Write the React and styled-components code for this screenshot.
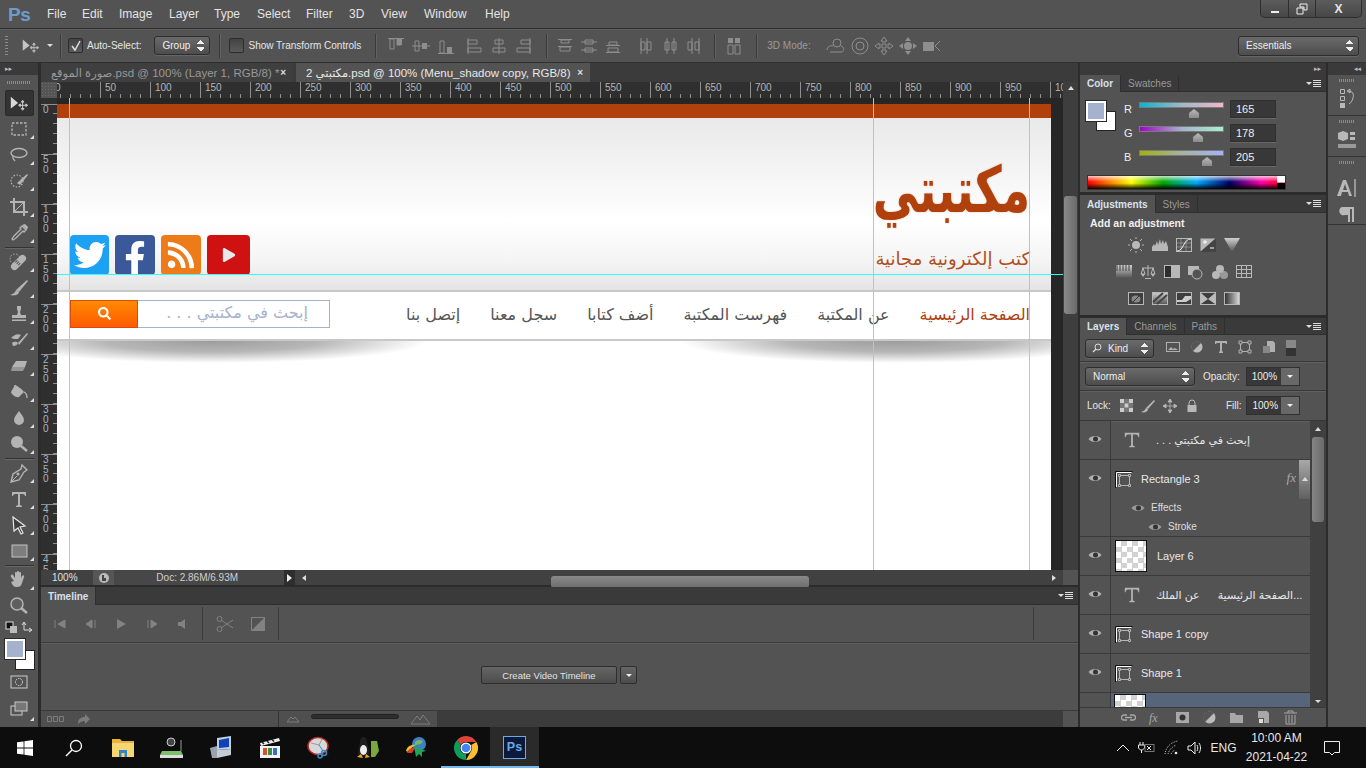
import React from 'react';
import styled, { createGlobalStyle } from 'styled-components';
import { FaTwitter, FaFacebookF, FaRss, FaPlay, FaSearch } from 'react-icons/fa';

const UI = '"Liberation Sans", "DejaVu Sans", sans-serif';
const AR = '"DejaVu Sans", sans-serif';

const Global = createGlobalStyle`
  html, body { margin: 0; padding: 0; background: #535353; overflow: hidden; }
  * { box-sizing: border-box; }
`;

const Screen = styled.div`
  width: 1366px;
  height: 768px;
  display: flex;
  flex-direction: column;
  background: #535353;
  color: #e6e6e6;
  font-family: ${UI};
  font-size: 10px;
  overflow: hidden;
`;

/* menu bar */
const MenuBar = styled.div`
  height: 29px;
  flex: none;
  display: flex;
  align-items: center;
  position: relative;
  border-bottom: 1px solid #2f2f2f;
  padding-left: 8px;
`;
const PsLogo = styled.div`
  width: 39px;
  font: bold 19px/1 "Liberation Sans", sans-serif;
  color: #6c9ccb;
  letter-spacing: -0.5px;
`;
const MenuItem = styled.div`
  font-size: 12px;
  color: #e4e4e4;
  width: ${(p) => p.$w}px;
`;
const WinButtons = styled.div`
  position: absolute;
  right: 4px;
  top: 0;
  height: 18px;
  width: 102px;
  display: grid;
  grid-template-columns: 28px 27px 1fr;
  background: linear-gradient(#5c5c5c, #474747);
  border: 1px solid #2e2e2e;
  border-top: 0;
  border-radius: 0 0 5px 5px;
`;
const WinBtn = styled.div`
  display: flex;
  align-items: center;
  justify-content: center;
  border-right: 1px solid #2e2e2e;
  font-weight: bold;
  font-size: 12px;
  &:last-child { border-right: 0; }
`;

/* options bar */
const OptionsBar = styled.div`
  height: 34px;
  flex: none;
  display: flex;
  align-items: center;
  border-bottom: 1px solid #2f2f2f;
  box-shadow: inset 0 1px 0 #606060;
  padding-left: 5px;
`;
const Grip = styled.div`
  width: 3px;
  height: 20px;
  background: repeating-linear-gradient(#8a8a8a 0 1px, transparent 1px 3px);
`;
const VSep = styled.div`
  width: 1px;
  height: 24px;
  background: #3a3a3a;
  box-shadow: 1px 0 0 #626262;
  margin-left: ${(p) => p.$ml}px;
  flex: none;
`;
const Check = styled.div`
  width: 15px;
  height: 15px;
  flex: none;
  margin-left: ${(p) => p.$ml}px;
  border: 1px solid #2d2d2d;
  border-radius: 2px;
  background: linear-gradient(#444, #5a5a5a);
  display: flex;
  align-items: center;
  justify-content: center;
`;
const OptLabel = styled.span`
  margin-left: ${(p) => p.$ml || 0}px;
  color: ${(p) => p.$dim ? '#9c9c9c' : '#e6e6e6'};
  white-space: nowrap;
  flex: none;
`;
const Select = styled.div`
  flex: none;
  width: ${(p) => p.$w}px;
  height: ${(p) => p.$h || 19}px;
  margin-left: ${(p) => p.$ml || 0}px;
  display: flex;
  align-items: center;
  justify-content: space-between;
  padding: 0 5px 0 ${(p) => p.$pl || 7}px;
  border: 1px solid #2d2d2d;
  border-radius: 3px;
  background: linear-gradient(#6a6a6a, #4d4d4d);
  color: #eee;
  box-shadow: 0 1px 0 #666;
`;
const KindLabel = styled.span`
  display: flex;
  align-items: center;
  gap: 6px;
`;
const Updown = styled.span`
  display: inline-block;
  width: 7px;
  height: 11px;
  flex: none;
  background:
    linear-gradient(135deg, transparent 50%, #eee 50%) 0 0 / 4px 4px no-repeat,
    linear-gradient(225deg, transparent 50%, #eee 50%) 3.5px 0 / 4px 4px no-repeat,
    linear-gradient(45deg, transparent 50%, #eee 50%) 0 7px / 4px 4px no-repeat,
    linear-gradient(315deg, transparent 50%, #eee 50%) 3.5px 7px / 4px 4px no-repeat;
`;
const IconRow = styled.div`
  display: flex;
  flex: none;
  margin-left: ${(p) => p.$ml || 0}px;
  gap: ${(p) => p.$gap || 0}px;
  color: ${(p) => p.$c || '#8e8e8e'};
`;
const OptSpacer = styled.div`flex: 1;`;

/* workspace */
const Workspace = styled.div`
  flex: 1;
  min-height: 0;
  display: flex;
  background: #2c2c2c;
`;

/* tools */
const ToolColumn = styled.div`
  width: 38px;
  flex: none;
  background: #535353;
  display: flex;
  flex-direction: column;
  align-items: center;
`;
const CollapseStrip = styled.div`
  height: 12px;
  align-self: stretch;
  background: #3a3a3a;
  color: #bbb;
  font-size: 7px;
  line-height: 12px;
  padding-left: 5px;
  flex: none;
`;
const GripH = styled.div`
  width: 24px;
  height: 3px;
  margin: 6px 0 6px;
  flex: none;
  background: repeating-linear-gradient(90deg, #8a8a8a 0 1px, transparent 1px 2px);
`;
const ToolBtn = styled.div`
  position: relative;
  width: 29px;
  height: ${(p) => p.$h || 26}px;
  flex: none;
  display: flex;
  align-items: center;
  justify-content: center;
  color: #b4b4b4;
  ${(p) => p.$active && 'background: #333; border: 1px solid #2a2a2a; border-radius: 2px; color: #d8d8d8;'}
  ${(p) => p.$corner && `
    &::after {
      content: '';
      position: absolute;
      right: 0;
      bottom: 3px;
      border-style: solid;
      border-width: 0 0 4px 4px;
      border-color: transparent transparent #ddd transparent;
    }
  `}
`;
const ToolDivider = styled.div`
  width: 29px;
  height: 1px;
  margin: 1px 0;
  background: #333;
  box-shadow: 0 1px 0 #666;
  flex: none;
`;
const SwapRow = styled.div`
  width: 29px;
  height: 16px;
  display: flex;
  justify-content: space-between;
  align-items: center;
  flex: none;
`;
const ColorStack = styled.div`
  position: relative;
  width: 31px;
  height: 32px;
  margin-top: 3px;
  flex: none;
`;
const Swatch = styled.div`
  position: absolute;
  left: ${(p) => p.$x}px;
  top: ${(p) => p.$y}px;
  width: ${(p) => p.$s}px;
  height: ${(p) => p.$s}px;
  background: ${(p) => p.$c};
  border: 1px solid ${(p) => p.$line || '#222'};
  ${(p) => p.$ring && `box-shadow: 0 0 0 1px #fff inset, 0 0 0 1px #2a2a2a;`}
`;

/* center */
const Center = styled.div`
  width: 1037px;
  margin-left: 3px;
  flex: none;
  display: flex;
  flex-direction: column;
  min-height: 0;
`;
const DocTabs = styled.div`
  height: 19px;
  flex: none;
  display: flex;
  background: #3b3b3b;
  width: 1037px;
`;
const DocTab = styled.div`
  width: ${(p) => p.$w}px;
  margin-right: ${(p) => p.$mr || 0}px;
  display: flex;
  align-items: center;
  justify-content: space-between;
  padding: 0 7px 0 10px;
  white-space: nowrap;
  background: ${(p) => p.$active ? '#535353' : '#3f3f3f'};
  color: ${(p) => p.$active ? '#e8e8e8' : '#989898'};
  font-size: 11.5px;
`;
const CloseX = styled.span`
  font-size: 10px;
  font-weight: bold;
  color: #ddd;
`;
const RulerRow = styled.div`
  height: 16px;
  flex: none;
  display: flex;
  position: relative;
  background: #2f2f2f;
  overflow: hidden;
`;
const RulerCorner = styled.div`
  width: 16px;
  flex: none;
  position: relative;
  z-index: 2;
  background: #555;
  background-image: radial-gradient(#6a6a6a 0.5px, transparent 0.6px);
  background-size: 3px 3px;
`;
const RulerTrack = styled.div`
  flex: 1;
  display: flex;
  margin-left: -7px;
  overflow: hidden;
`;
const RulerCell = styled.div`
  width: 50px;
  flex: none;
  border-left: 1px solid #8f8f8f;
  padding-left: 4px;
  font-size: 10px;
  line-height: 11px;
  color: #b5b5b5;
  background: repeating-linear-gradient(90deg, transparent 0 9px, #8f8f8f 9px 10px) 0 100% / 100% 4px no-repeat;
`;
const ScrollTop = styled.div`
  width: 15px;
  flex: none;
  background: #3e3e3e;
  display: flex;
  justify-content: center;
  padding-top: 4px;
`;
const TriUp = styled.span`
  width: 0;
  height: 0;
  border-left: 3px solid transparent;
  border-right: 3px solid transparent;
  border-bottom: 4px solid #ddd;
`;
const CanvasRow = styled.div`
  flex: 1;
  min-height: 0;
  display: flex;
`;
const VRuler = styled.div`
  width: 16px;
  flex: none;
  background: #2f2f2f;
  padding-top: 6px;
  overflow: hidden;
`;
const VRulerCell = styled.div`
  height: 50px;
  display: flex;
  flex-direction: column;
  padding: 1px 0 0 2px;
  font-size: 10px;
  line-height: 9.5px;
  color: #a8b4c0;
  background:
    linear-gradient(#8f8f8f, #8f8f8f) 100% 0 / 16px 1px no-repeat,
    repeating-linear-gradient(transparent 0 9px, #8f8f8f 9px 10px) 100% 0 / 4px 100% no-repeat;
`;
const Pasteboard = styled.div`
  position: relative;
  flex: 1;
  min-width: 0;
  background: #262626;
  padding: 6px 12px 0 0;
  overflow: hidden;
`;
const Guide = styled.div`
  position: absolute;
  background: #30ffff;
  z-index: 3;
  ${(p) => p.$h
    ? `left: 0; right: 0; top: ${p.$at}px; height: 1px;`
    : `top: 0; bottom: 0; left: ${p.$at}px; width: 1px;`}
`;
const Doc = styled.div`
  height: 100%;
  background: #fff;
  overflow: hidden;
  direction: ltr;
`;
const TopBand = styled.div`
  height: 14px;
  background: #b0400c;
`;
const Header = styled.div`
  height: 172px;
  padding: 0 21px 15px 13px;
  display: flex;
  justify-content: space-between;
  align-items: flex-end;
  background: linear-gradient(#e9e9e9 0, #fff 60%, #f4f4f4 84%, #e4e4e4 100%);
`;
const SocialRow = styled.div`
  display: flex;
  gap: 6px;
`;
const Social = styled.div`
  width: ${(p) => p.$w || 40}px;
  height: 40px;
  background: ${(p) => p.$bg};
  border-radius: 4px;
  color: ${(p) => p.$fg || '#fff'};
  display: flex;
  align-items: ${(p) => p.$align || 'center'};
  justify-content: center;
  overflow: hidden;
`;
const Brand = styled.div`
  direction: rtl;
  display: flex;
  flex-direction: column;
  align-items: flex-start;
  margin-bottom: 4px;
  color: #b0400c;
  font-family: ${AR};
`;
const BrandTitle = styled.div`
  font-size: 64px;
  font-weight: bold;
  line-height: 70px;
  white-space: nowrap;
  transform: scaleX(0.715);
  transform-origin: right center;
  text-shadow: 0 0 2px rgba(176, 64, 12, 0.4);
`;
const BrandTag = styled.div`
  font-size: 18px;
  line-height: 24px;
  margin-top: 22px;
  white-space: nowrap;
  color: #b24e22;
`;
const Nav = styled.div`
  height: 51px;
  border-top: 2px solid #c8c8c8;
  border-bottom: 2px solid #c8c8c8;
  padding: 0 21px 0 13px;
  display: flex;
  align-items: center;
  justify-content: space-between;
  background: #fff;
`;
const SearchBox = styled.div`
  display: flex;
  height: 28px;
  margin-top: -4px;
`;
const SearchBtn = styled.div`
  width: 68px;
  background: linear-gradient(#ff8a00, #ff5a00);
  border: 1px solid #d84a10;
  color: #fff;
  display: flex;
  align-items: center;
  justify-content: center;
  font-size: 13px;
`;
const SearchInput = styled.div`
  width: 192px;
  border: 1px solid #a5b2cd;
  border-left: 0;
  color: #a5b2cd;
  font-family: ${AR};
  font-size: 16px;
  line-height: 23px;
  padding: 0 21px;
  direction: rtl;
  white-space: nowrap;
`;
const NavList = styled.div`
  display: flex;
  direction: rtl;
  gap: 30px;
  margin-top: -3px;
`;
const NavItem = styled.div`
  font-family: ${AR};
  font-size: 16px;
  white-space: nowrap;
  color: ${(p) => p.$active ? '#b0400c' : '#555'};
`;
const ShadowStrip = styled.div`
  height: 24px;
  display: flex;
  justify-content: space-between;
  overflow: hidden;
  margin: 0 -60px;
`;
const ShadowBlob = styled.div`
  width: 430px;
  height: 44px;
  margin-top: -22px;
  background: radial-gradient(closest-side, #9c9c9c 0, rgba(170, 170, 170, 0.85) 50%, rgba(255, 255, 255, 0) 100%);
`;
const VScroll = styled.div`
  width: 15px;
  flex: none;
  background: #3e3e3e;
  padding: 98px 1px 0;
`;
const VThumb = styled.div`
  height: 118px;
  background: linear-gradient(90deg, #8a8a8a, #6a6a6a);
  border-radius: 3px;
`;
const StatusBar = styled.div`
  height: 16px;
  flex: none;
  display: flex;
  align-items: center;
  background: #414141;
  border-bottom: 1px solid #2b2b2b;
`;
const StatusZoom = styled.div`
  width: 52px;
  padding-left: 11px;
  color: #e0e0e0;
`;
const StatusIcon = styled.div`
  width: 22px;
  height: 15px;
  background: #565656;
  display: flex;
  align-items: center;
  justify-content: center;
`;
const StatusDoc = styled.div`
  width: 171px;
  height: 15px;
  line-height: 15px;
  text-align: center;
  color: #d0d0d0;
  background: #474747;
  padding-right: 4px;
`;
const StatusArrow = styled.div`
  width: 11px;
  height: 15px;
  background: #2e2e2e;
  display: flex;
  align-items: center;
  justify-content: center;
`;
const TriRight = styled.span`
  width: 0;
  height: 0;
  border-top: ${(p) => p.$sm ? 3 : 4}px solid transparent;
  border-bottom: ${(p) => p.$sm ? 3 : 4}px solid transparent;
  border-left: ${(p) => p.$sm ? 4 : 5}px solid ${(p) => p.$c || '#eee'};
`;
const TriLeft = styled.span`
  width: 0;
  height: 0;
  border-top: 3px solid transparent;
  border-bottom: 3px solid transparent;
  border-right: 4px solid #ddd;
`;
const HScroll = styled.div`
  width: 775px;
  display: flex;
  align-items: center;
  padding-left: 7px;
  position: relative;
`;
const HThumb = styled.div`
  position: absolute;
  left: 256px;
  top: 1px;
  width: 258px;
  height: 12px;
  border-radius: 3px;
  background: linear-gradient(#8a8a8a, #6c6c6c);
`;
const HRight = styled.div`
  margin-left: auto;
  margin-right: 7px;
  display: flex;
`;
const CornerPatch = styled.div`
  width: 15px;
  height: 15px;
  background: #535353;
`;

const TimelinePanel = styled.div`
  height: 140px;
  flex: none;
  margin-top: 1px;
  display: flex;
  flex-direction: column;
  background: #535353;
`;
const PanelTabs = styled.div`
  height: ${(p) => p.$h || 18}px;
  flex: none;
  display: flex;
  background: #3a3a3a;
  border-bottom: 1px solid #2f2f2f;
  position: relative;
`;
const PanelTab = styled.div`
  padding: 0 ${(p) => p.$pad || 7}px;
  display: flex;
  align-items: center;
  font-weight: ${(p) => p.$active ? 'bold' : 'normal'};
  color: ${(p) => p.$active ? '#d8e2ec' : '#999'};
  background: ${(p) => p.$active ? '#535353' : 'transparent'};
  border-right: 1px solid #2f2f2f;
  font-size: 10px;
  height: calc(100% + 1px);
`;
const PanelMenu = styled.div`
  position: absolute;
  right: 5px;
  top: 5px;
  display: flex;
  align-items: center;
  gap: 1px;
`;
const Bars = styled.span`
  width: 8px;
  height: 7px;
  background: repeating-linear-gradient(#ddd 0 1px, transparent 1px 2px);
`;
const TriDown = styled.span`
  width: 0;
  height: 0;
  border-left: 3px solid transparent;
  border-right: 3px solid transparent;
  border-top: 3px solid ${(p) => p.$c || '#ddd'};
`;
const TimelineControls = styled.div`
  height: 38px;
  flex: none;
  display: flex;
  border-bottom: 1px solid #3a3a3a;
  color: #828282;
  box-shadow: 0 1px 0 #5f5f5f;
`;
const ControlsGroup = styled.div`
  width: ${(p) => p.$w}px;
  display: flex;
  align-items: center;
  justify-content: space-around;
  padding: 0 ${(p) => p.$pad || 0}px;
  border-right: 1px solid #3a3a3a;
  margin: 2px 0;
`;
const TimelineBody = styled.div`
  flex: 1;
  display: flex;
  padding: 23px 0 0 440px;
  gap: 3px;
`;
const TimelineBtn = styled.div`
  height: 18px;
  width: ${(p) => p.$w}px;
  border: 1px solid #2d2d2d;
  border-radius: 2px;
  background: linear-gradient(#666, #4c4c4c);
  color: #e4e4e4;
  display: flex;
  align-items: center;
  justify-content: center;
  font-size: 9.5px;
`;
const TimelineFoot = styled.div`
  height: 17px;
  flex: none;
  display: flex;
  border-top: 1px solid #3a3a3a;
  background: #3c3c3c;
`;
const FootLeft = styled.div`
  width: 238px;
  background: #4f4f4f;
  border-right: 1px solid #333;
  display: flex;
  align-items: center;
  padding-left: 6px;
  gap: 12px;
  color: #7c7c7c;
`;
const FootMid = styled.div`
  width: 158px;
  background: #4f4f4f;
  display: flex;
  align-items: center;
  justify-content: space-between;
  padding: 0 6px 0 8px;
  color: #7c7c7c;
`;
const FootGap = styled.div`flex: 1;`;
const FootEnd = styled.div`
  width: 15px;
  background: #535353;
`;
const ZoomTrack = styled.div`
  width: 88px;
  height: 5px;
  margin-top: -6px;
  border-radius: 3px;
  background: #2e2e2e;
  border: 1px solid #222;
`;

/* right panels */
const Panels = styled.div`
  width: 246px;
  margin-left: 2px;
  flex: none;
  display: flex;
  flex-direction: column;
  min-height: 0;
`;
const PanelCollapse = styled.div`
  height: 12px;
  flex: none;
  background: #3a3a3a;
  text-align: right;
  font-size: 7px;
  line-height: 12px;
  color: #bbb;
  padding-right: 5px;
`;
const Panel = styled.div`
  height: ${(p) => p.$h}px;
  flex: none;
  margin-bottom: 3px;
  display: flex;
  flex-direction: column;
  background: #535353;
`;
const ColorBody = styled.div`
  flex: 1;
  position: relative;
  padding: 8px 0 0 50px;
`;
const SliderRow = styled.div`
  height: 24px;
  display: flex;
  align-items: flex-start;
`;
const SliderLabel = styled.div`
  width: 9px;
  margin: 3px 0 0 -6px;
  font-size: 11px;
  color: #eee;
`;
const SliderWrap = styled.div`
  width: 85px;
  margin-left: 6px;
  position: relative;
`;
const SliderBar = styled.div`
  height: 6px;
  margin-top: 2px;
  border: 1px solid #7a7a7a;
  background: ${(p) => p.$bg};
`;
const SliderThumb = styled.div`
  position: absolute;
  left: ${(p) => p.$x}px;
  top: 9px;
  width: 10px;
  height: 9px;
  background: linear-gradient(#bbb, #8a8a8a);
  clip-path: polygon(50% 0, 100% 45%, 100% 100%, 0 100%, 0 45%);
`;
const ValueBox = styled.div`
  width: 46px;
  height: 18px;
  margin: 0 0 0 6px;
  background: #383838;
  border: 1px solid #303030;
  color: #eee;
  font-size: 11px;
  line-height: 17px;
  padding-left: 5px;
  box-shadow: 0 1px 0 #666;
`;
const Spectrum = styled.div`
  position: absolute;
  left: 7px;
  top: 83px;
  width: 199px;
  height: 15px;
  border: 1px solid #333;
  background:
    linear-gradient(90deg, transparent 96%, #fff 96%) top / 100% 50% no-repeat,
    linear-gradient(90deg, transparent 96%, #000 96%) bottom / 100% 50% no-repeat,
    linear-gradient(rgba(255,255,255,.75), rgba(255,255,255,0) 45%, rgba(0,0,0,0) 55%, rgba(0,0,0,.95)),
    linear-gradient(90deg, #f00, #ff0 22%, #0a0 38%, #0af 55%, #006 72%, #f0a 88%, #f00);
`;
const AdjTitle = styled.div`
  font-weight: bold;
  font-size: 10.5px;
  padding: 4px 0 0 10px;
  color: #f0f0f0;
  height: 18px;
`;
const AdjRow = styled.div`
  height: 27px;
  display: flex;
  justify-content: center;
  align-items: center;
  gap: 8px;
  padding-right: 38px;
  color: #b8b8b8;
`;
const FilterRow = styled.div`
  height: ${(p) => p.$h}px;
  flex: none;
  display: flex;
  align-items: center;
  padding: 0 5px;
  border-bottom: 1px solid #383838;
  box-shadow: 0 1px 0 #606060;
  color: #c0c0c0;
`;
const NumBox = styled.div`
  width: 54px;
  height: 19px;
  margin-left: ${(p) => p.$ml || 0}px;
  display: flex;
  background: #383838;
  border: 1px solid #303030;
  line-height: 17px;
  color: #eee;
  padding-left: 5px;
`;
const NumArrow = styled.div`
  margin-left: auto;
  width: 18px;
  background: #686868;
  display: flex;
  align-items: center;
  justify-content: center;
`;
const LayersWrap = styled.div`
  flex: 1;
  min-height: 0;
  display: flex;
  overflow: hidden;
`;
const LayerList = styled.div`
  width: 230px;
  flex: none;
`;
const LayerRow = styled.div`
  height: ${(p) => p.$h || 39}px;
  display: flex;
  border-bottom: 1px solid #3a3a3a;
  position: relative;
  background: ${(p) => p.$selected ? '#56657a' : 'transparent'};
  overflow: hidden;
`;
const EyeCell = styled.div`
  width: 31px;
  flex: none;
  border-right: 1px solid #3a3a3a;
  background: #535353;
  display: flex;
  justify-content: center;
  padding-top: 13px;
  color: #b0b0b0;
`;
const LayerBody = styled.div`
  flex: 1;
  min-width: 0;
  display: flex;
  flex-direction: column;
`;
const LayerMain = styled.div`
  height: 38px;
  flex: none;
  display: flex;
  align-items: center;
  padding-left: 4px;
  color: #e8e8e8;
  font-size: 11px;
  white-space: nowrap;
`;
const LayerName = styled.span`
  margin-left: ${(p) => p.$ml || 0}px;
  font-family: ${UI};
  direction: ${(p) => p.$rtl ? 'rtl' : 'ltr'};
`;
const TypeSlot = styled.span`
  margin-left: 8px;
  flex: none;
`;
const EffectLine = styled.div`
  height: 19px;
  display: flex;
  align-items: center;
  gap: 6px;
  padding-left: ${(p) => p.$pl}px;
  color: #dedede;
  font-size: 10px;
`;
const Checker = styled.div`
  width: 32px;
  height: 32px;
  margin-top: ${(p) => p.$mt || 0}px;
  margin-left: ${(p) => p.$ml || 0}px;
  flex: none;
  border: 1px solid #111;
  background: repeating-conic-gradient(#d2d2d2 0 25%, #fff 0 50%) 0 0 / 11px 11px;
`;
const FxMark = styled.span`
  position: absolute;
  right: 14px;
  top: 10px;
  font: italic 13px "Liberation Serif", serif;
  color: #aaa;
`;
const FxScroll = styled.div`
  position: absolute;
  right: 0;
  top: 0;
  width: 11px;
  height: 39px;
  background: linear-gradient(#a8a8a8, #606060);
  display: flex;
  justify-content: center;
  padding-top: 17px;
`;
const LayerScroll = styled.div`
  flex: 1;
  background: #404040;
  display: flex;
  flex-direction: column;
  align-items: center;
  padding: 6px 1px 4px;
`;
const LayerThumb = styled.div`
  width: 12px;
  height: 85px;
  margin-top: 6px;
  border-radius: 3px;
  background: linear-gradient(90deg, #858585, #6a6a6a);
`;
const LayerFoot = styled.div`
  height: 20px;
  flex: none;
  display: flex;
  align-items: center;
  justify-content: flex-end;
  gap: 12px;
  padding-right: 28px;
  border-top: 1px solid #3a3a3a;
  color: #a8a8a8;
`;

/* dock */
const Dock = styled.div`
  width: 38px;
  margin-left: 2px;
  flex: none;
  display: flex;
  flex-direction: column;
`;
const DockSection = styled.div`
  height: ${(p) => p.$h}px;
  flex: none;
  display: flex;
  flex-direction: column;
  align-items: center;
  gap: ${(p) => p.$gap || 0}px;
  background: #535353;
  border-bottom: 1px solid #333;
  color: #b8b8b8;
`;
const DockFill = styled.div`
  flex: 1;
  background: #535353;
`;
const DockGrip = styled(GripH)`
  margin: 4px 0 6px;
  width: 16px;
`;

/* taskbar */
const Taskbar = styled.div`
  height: 41px;
  flex: none;
  display: flex;
  align-items: stretch;
  background: #0d0d0d;
`;
const TaskBtn = styled.div`
  width: 49px;
  flex: none;
  display: flex;
  align-items: center;
  justify-content: center;
  background: ${(p) => p.$active ? '#2a2a2a' : 'transparent'};
  border-bottom: 2px solid ${(p) => p.$open ? '#76b9ed' : 'transparent'};
  padding-top: 2px;
`;
const Tray = styled.div`
  margin-left: auto;
  padding-right: 12px;
  display: flex;
  align-items: center;
  color: #e8e8e8;
  font-family: ${UI};
  font-size: 12px;
`;
const TrayItem = styled.div`
  width: ${(p) => p.$w}px;
  display: flex;
  justify-content: center;
  flex: none;
`;
const Clock = styled.div`
  width: 65px;
  text-align: center;
  line-height: 19px;
  font-size: 12px;
  white-space: nowrap;
`;

/* drawings */
const Svg = ({ s = 20, w, h, vb = '0 0 20 20', children }) => (
  <svg width={w || s} height={h || s} viewBox={vb} fill="none" style={{ flex: 'none', display: 'block' }}>{children}</svg>
);

const MoveIcon = ({ c = 'currentColor', s = 20 }) => (
  <Svg s={s} vb="0 0 22 20">
    <path d="M2 3v13l8-6z" fill={c} />
    <path d="M15 8v9M11 12.500h9M15 7l-1.500 2h3zM15 18l-1.500-2h3zM10.500 12.500l2-1.500v3zM20.500 12.500l-2-1.500v3z" stroke={c} strokeWidth="1" />
  </Svg>
);

const toolIcons = [
  [<MoveIcon />, true],
  [<Svg><rect x="3" y="4" width="14" height="12" stroke="currentColor" strokeWidth="1.300" strokeDasharray="2.500 1.500" /></Svg>],
  [<Svg><ellipse cx="10" cy="8" rx="8" ry="4.500" stroke="currentColor" strokeWidth="1.400" /><path d="M4 11c-1 3 1 3 2 5" stroke="currentColor" strokeWidth="1.300" /></Svg>],
  [<Svg><circle cx="8" cy="10" r="6" stroke="currentColor" strokeWidth="1.200" strokeDasharray="1.500 1.500" /><path d="M8 12 18 3l1 1-8 10z" fill="currentColor" /></Svg>],
  [<Svg><path d="M5 1v14h14M1 5h14v14" stroke="currentColor" strokeWidth="2" /><path d="M5 15 15 5" stroke="currentColor" strokeWidth="1" /></Svg>],
  [<Svg><path d="M13 3l4 4-2 2-1-1-7 7-3 2-1-1 2-3 7-7-1-1z" stroke="currentColor" strokeWidth="1.300" /><path d="M13 2l5 5 1-3-3-3z" fill="currentColor" /></Svg>],
  'div',
  [<Svg><path d="M3 12 11 4a3 3 0 0 1 5 5l-8 8a3 3 0 0 1-5-5z" fill="currentColor" /><circle cx="6" cy="7" r="5" stroke="currentColor" strokeDasharray="1.500 1.500" /><path d="m7 9 4 4" stroke="#535353" strokeDasharray="1 1" strokeWidth="3" /></Svg>],
  [<Svg><path d="M7 12 18 2l1 1-9 11z" fill="currentColor" /><path d="M7 12c-1 3-3 4-6 5 4 1 9 0 9-3z" fill="currentColor" /></Svg>],
  [<Svg><path d="M8 2h4v3l-1 3 1 3h5v3H3v-3h5l1-3-1-3z" fill="currentColor" /><rect x="3" y="15.500" width="14" height="1.500" fill="currentColor" /></Svg>],
  [<Svg><path d="M2 8c5-5 8-4 10-3L9 9c-3 0-5 0-7-1z" fill="currentColor" /><path d="M9 13 18 3l1 1-9 11z" fill="currentColor" /><path d="M3 13c3-2 5-1 6 0-1 2-2 3-5 3z" fill="currentColor" /></Svg>],
  [<Svg><path d="M7 5h11l-2 6H3z" fill="currentColor" /><path d="M3 11h13l-2 4H2z" fill="currentColor" opacity="0.7" /></Svg>],
  [<Svg><path d="M6 3c3 1 8 5 9 7l-5 5c-3 1-7-2-8-5z" fill="currentColor" /><path d="M6 3v5M15 10c2 1 3 3 3 6" stroke="currentColor" strokeWidth="1.300" /></Svg>],
  [<Svg><path d="M10 3c2 3 5 6 5 9a5 5 0 0 1-10 0c0-3 3-6 5-9z" fill="currentColor" /></Svg>],
  [<Svg><circle cx="8" cy="8" r="6" fill="currentColor" /><path d="m12 12 6 5" stroke="currentColor" strokeWidth="2.500" /></Svg>],
  'div',
  [<Svg><path d="M13 2l5 5-3 2-5 8-8 2 2-8 8-5z" stroke="currentColor" strokeWidth="1.400" /><path d="M2 19l6-6" stroke="currentColor" /><circle cx="9" cy="11" r="1.500" fill="currentColor" /></Svg>],
  [<Svg><path d="M3 3h14v4h-1c0-1-1-2-2-2h-3v11l2 1v1H7v-1l2-1V5H6C5 5 4 6 4 7H3z" fill="currentColor" /></Svg>],
  [<Svg><path d="M4 2l12 9-5 1 3 6-2 1-3-6-4 3z" stroke="#e6e6e6" strokeWidth="1.200" fill="#3e3e3e" /></Svg>],
  [<Svg><rect x="3" y="4" width="15" height="12" fill="#7e7e7e" stroke="#c4c4c4" /></Svg>],
  'div',
  [<Svg><path d="M5 11 2 7c-1-2 1-3 2-2l2 3V3c0-1.500 2-1.500 2 0v4-5c0-1.500 2-1.500 2 0v5-4c0-1.500 2-1.500 2 0v5l1-2c1-1.500 3-.5 2 1l-2 6c-1 3-2 4-5 4-3 0-4-1-6-5z" fill="currentColor" /></Svg>, false, true],
  [<Svg><circle cx="8" cy="8" r="6" fill="#5f5f5f" stroke="currentColor" strokeWidth="1.500" /><path d="m12 12 6 5" stroke="currentColor" strokeWidth="2.500" /></Svg>, false, false],
];

const AlignIcon = ({ v }) => {
  const shapes = {
    top: <><path d="M2 2.500h16M4 3v10h4V3zM11 3h4v6h-4z" stroke="currentColor" /><rect x="11" y="3" width="5" height="6" fill="currentColor" /></>,
    mid: <><path d="M1 10h18M4 5v10h4V5z" stroke="currentColor" /><rect x="11" y="7" width="5" height="6" fill="currentColor" /></>,
    bot: <><path d="M2 17.500h16M4 5v12h4V5z" stroke="currentColor" /><rect x="11" y="11" width="5" height="6" fill="currentColor" /></>,
    left: <><path d="M3 2v16M3 4h9v4H3zM3 12h13v4H3z" stroke="currentColor" /></>,
    cen: <><path d="M10 2v16M6 4h8v4H6zM4 12h12v4H4z" stroke="currentColor" /></>,
    right: <><path d="M17 2v16M8 4h9v4H8zM4 12h13v4H4z" stroke="currentColor" /></>,
    dt: <><path d="M3 3.500h14M3 10.500h14M6 4h8v3H6zM5 11h10v4H5z" stroke="currentColor" /></>,
    dm: <><path d="M2 6h16M2 14h16M6 4h8v4H6zM6 12h8v4H6z" stroke="currentColor" /></>,
    db: <><path d="M3 16.500h14M3 9.500h14M6 6h8v3H6zM5 12h10v4H5z" stroke="currentColor" /></>,
    dl: <><path d="M5 2v16M11 2v16M5 6h4v8H5zM11 6h4v8h-4z" stroke="currentColor" /></>,
    dc: <><path d="M7 2v16M14 2v16M5 6h4v8H5zM12 6h4v8h-4z" stroke="currentColor" /></>,
    dr: <><path d="M8 2v16M15 2v16M4 6h4v8H4zM11 6h4v8h-4z" stroke="currentColor" /></>,
    auto: <><path d="M4 2h5v5H4zM11 2h5v5h-5z" fill="currentColor" /><path d="M4 9h5v9H4zM11 9h5v9h-5z" stroke="currentColor" /></>,
  };
  return <Svg s={20}>{shapes[v]}</Svg>;
};

const Eye = ({ c = 'currentColor' }) => (
  <Svg w={14} h={10} vb="0 0 14 10">
    <path d="M0.500 5C3 1 11 1 13.500 5 11 9 3 9 0.500 5z" fill={c} />
    <circle cx="7.500" cy="5" r="2.500" fill="#333" />
  </Svg>
);

const TypeGlyph = () => (
  <TypeSlot>
    <Svg s={18}>
      <path d="M2 2h16v5h-1c0-2-1-3-3-3h-3v12l2 1v1H7v-1l2-1V4H6C4 4 3 5 3 7H2z" fill="#b4b4b4" />
    </Svg>
  </TypeSlot>
);

const ShapeThumb = () => (
  <Svg w={18} h={17} vb="0 0 18 17">
    <path d="M0.500 17V0.500h17" stroke="#111" strokeWidth="1" />
    <path d="M1.500 16V1.500h15" stroke="#fff" strokeWidth="1" />
    <rect x="4.500" y="4.500" width="10" height="10" stroke="#b5b5b5" />
    <path d="M3.500 3.500h2v2h-2zM13.500 3.500h2v2h-2zM3.500 13.500h2v2h-2zM13.500 13.500h2v2h-2z" stroke="#b5b5b5" fill="#535353" />
  </Svg>
);

const Adj = ({ v }) => {
  const g = 'url(#adjg)';
  const art = {
    sun: <><circle cx="8" cy="8" r="4" fill="currentColor" /><path d="M8 0v2M8 14v2M0 8h2M14 8h2M2 2l2 2M12 12l2 2M14 2l-2 2M2 14l2-2" stroke="currentColor" /></>,
    levels: <path d="M0 14V10l2-3 1 2 2-5 1 4 2-6 1 5 2-4 1 4 2-3 2 6v4z" fill="currentColor" />,
    curves: <><rect x="0.500" y="1.500" width="15" height="13" stroke="currentColor" /><path d="M5 1v14M10 1v14M0 6h16M0 10h16" stroke="currentColor" opacity="0.5" /><path d="M1 14c7 0 6-12 14-12" stroke="#eee" /></>,
    expo: <><rect x="0.500" y="1.500" width="15" height="13" fill="currentColor" /><path d="M0 15 16 1v14z" fill="#444" /><path d="M3 5h4M5 3v4M10 11h4" stroke="#fff" /></>,
    tri: <path d="M0 1h16L8 15z" fill={g} />,
    hue: <><rect x="0" y="1" width="16" height="13" fill={g} /><path d="M1 1v6M4 1v6M7 1v6M10 1v6M13 1v6" stroke="#444" /></>,
    bal: <><path d="M8 1v11M2 4h12M1 10l2-6 2 6zM11 10l2-6 2 6z" stroke="currentColor" /><path d="M1 10h4l-2 3zM11 10h4l-2 3zM5 14h6v1H5z" fill="currentColor" /></>,
    bw: <><rect x="0.500" y="1.500" width="15" height="12" stroke="currentColor" /><rect x="1" y="2" width="6" height="11" fill="#2e2e2e" /><rect x="7" y="2" width="8" height="11" fill="currentColor" /></>,
    photo: <><rect x="0" y="2" width="11" height="9" fill="currentColor" /><circle cx="9" cy="10" r="5" stroke="currentColor" fill="#535353" /></>,
    mixer: <><circle cx="8" cy="5" r="4" fill="currentColor" /><circle cx="4" cy="11" r="4" fill="currentColor" /><circle cx="12" cy="11" r="4" fill="currentColor" opacity="0.7" /></>,
    lut: <><rect x="0.500" y="1.500" width="15" height="12" stroke="currentColor" /><path d="M5.500 1v13M10.500 1v13M0 5.500h16M0 9.500h16" stroke="currentColor" /></>,
    inv: <><rect x="0.500" y="1.500" width="15" height="12" fill="#3e3e3e" stroke="currentColor" /><ellipse cx="8" cy="8" rx="4.500" ry="3.500" fill="#888" /><path d="M4 12 12 4" stroke="#333" /></>,
    post: <><rect x="0.500" y="1.500" width="15" height="12" fill={g} stroke="currentColor" /><path d="M1 11 11 2M5 13 15 4" stroke="#444" strokeWidth="2" /></>,
    thresh: <><rect x="0.500" y="1.500" width="15" height="12" fill="#3e3e3e" stroke="currentColor" /><path d="M1 9 6 9 9 5h6v3l-5 3H1z" fill="#ccc" /></>,
    sel: <><rect x="0.500" y="1.500" width="15" height="12" fill="#3e3e3e" stroke="currentColor" /><path d="M1 2 8 8 15 2v11L8 8l-7 5z" fill="#bbb" /></>,
    map: <><rect x="0.500" y="1.500" width="15" height="12" stroke="currentColor" fill="url(#adjh)" /></>,
  };
  return (
    <Svg s={16} vb="0 0 16 16">
      <defs>
        <linearGradient id="adjg" x1="0" y1="0" x2="0" y2="1"><stop stopColor="#cfcfcf" /><stop offset="1" stopColor="#555" /></linearGradient>
        <linearGradient id="adjh" x1="0" y1="0" x2="1" y2="0"><stop stopColor="#2e2e2e" /><stop offset="1" stopColor="#ddd" /></linearGradient>
      </defs>
      {art[v]}
    </Svg>
  );
};

const Windows = () => (
  <Svg s={16} vb="0 0 16 16"><path d="M0 2.300 6.600 1.400v6.200H0zM7.400 1.300 16 0v7.600H7.400zM0 8.400h6.600v6.200L0 13.700zM7.400 8.400H16V16l-8.600-1.300z" fill="#fff" /></Svg>
);
const Magnifier = () => (
  <Svg s={18} vb="0 0 18 18"><circle cx="11" cy="7" r="5.500" stroke="#fff" strokeWidth="1.300" /><path d="M7 11 1 17" stroke="#fff" strokeWidth="1.500" /></Svg>
);
const Folder = () => (
  <Svg w={22} h={20} vb="0 0 22 20"><path d="M0 1h8l2 2h12v3H0z" fill="#e8b33a" /><rect y="5" width="22" height="14" fill="#f7d774" /><rect x="7" y="12" width="8" height="7" fill="#2f86c8" /><rect x="9.500" y="15" width="3" height="4" fill="#f7d774" /></Svg>
);
const Router = () => (
  <Svg s={24} vb="0 0 24 24"><circle cx="11" cy="6" r="4" fill="#444" stroke="#ccc" /><path d="M2 15h19l2 4H0z" fill="#7bbf6a" /><path d="M0 19h23v3H0z" fill="#ddd" /><path d="M21 4v11" stroke="#999" /></Svg>
);
const Pc = () => (
  <Svg s={24} vb="0 0 24 24"><path d="M8 2 22 0v13L8 14z" fill="#bcd0e6" /><path d="M10 4 20 2v9l-10 1z" fill="#1240b8" /><path d="M1 12l7-2v12H3z" fill="#9aa3ad" /><path d="M8 14l14-1v6L8 22z" fill="#c6ccd3" /></Svg>
);
const Clapper = () => (
  <Svg s={22} vb="0 0 22 22"><path d="M1 6 20 1l1 3L2 9z" fill="#eee" /><path d="M3 5l2 2M8 4l2 2M13 2.500l2 2" stroke="#222" strokeWidth="1.500" /><rect x="1" y="9" width="20" height="12" fill="#f2f2f2" /><path d="M4 11h4v7H4z" fill="#d2552a" /><path d="M9 11h4v7H9z" fill="#3c8c4a" /><path d="M14 11h4v7h-4z" fill="#3a6fc0" /></Svg>
);
const Disc = () => (
  <Svg s={24} vb="0 0 24 24"><ellipse cx="11" cy="10" rx="10" ry="8.500" fill="#d8d8d8" stroke="#b62a2a" strokeWidth="1.500" /><path d="M12 9 4 7M12 9l3-6" stroke="#999" /><circle cx="17" cy="17" r="2.500" stroke="#2f8fd0" strokeWidth="1.500" /><circle cx="13" cy="20" r="2" stroke="#2f8fd0" strokeWidth="1.500" /><path d="m12 9 4 6" stroke="#2f8fd0" /></Svg>
);
const Penguin = () => (
  <Svg s={24} vb="0 0 24 24"><path d="M15 5h6l2 10-4 6h-4z" fill="#7ba83c" /><path d="M7 1c3 0 4 2 4 5l2 8c1 4-1 5-2 6H3c-2-2-1-5 0-8l1-6c0-3 1-5 3-5z" fill="#1f1f1f" /><ellipse cx="7.500" cy="14" rx="3.500" ry="5" fill="#eee" /><path d="M1 21l4-3 2 4zM14 21l-4-3-1 4z" fill="#f2a81d" /></Svg>
);
const Idm = () => (
  <Svg s={24} vb="0 0 24 24"><circle cx="14" cy="8" r="7" fill="#3f7fc8" /><path d="M10 6c2-2 5-3 8-1l-2 3-6 1z" fill="#78b85a" /><path d="M1 15c1-5 6-7 10-6-3 1-5 3-6 6-1 1-3 1-4 0z" fill="#e9c12c" /><path d="M2 17c1-4 5-6 8-5l-3 5z" fill="#d8392b" /><path d="m9 10 12 5-4 1v5l-3-3-3 3z" fill="#23a455" /></Svg>
);
const Chrome = () => (
  <Svg s={24} vb="0 0 24 24">
    <path d="M12 0a12 12 0 0 1 10.400 6H12a6 6 0 0 0-5.200 3L3.300 3.800A12 12 0 0 1 12 0z" fill="#db4437" />
    <path d="M22.400 6A12 12 0 0 1 12 24l5.200-9a6 6 0 0 0 0-6z" fill="#fbc02d" />
    <path d="M12 24A12 12 0 0 1 3.300 3.800L6.800 9a6 6 0 0 0 5.200 9l-.0 6z" fill="#0f9d58" />
    <circle cx="12" cy="12" r="5.500" fill="#fff" />
    <circle cx="12" cy="12" r="4.300" fill="#4285f4" />
  </Svg>
);
const PsTile = styled.div`
  width: 23px;
  height: 23px;
  background: #0b1a3a;
  border: 1px solid #6fa8e8;
  color: #6fa8e8;
  font: bold 12.5px/21px "Liberation Sans", sans-serif;
  text-align: center;
`;

const rulerLabels = [0, 50, 100, 150, 200, 250, 300, 350, 400, 450, 500, 550, 600, 650, 700, 750, 800, 850, 900, 950, 1000];
const vLabels = ['0', '50', '100', '150', '200', '250', '300', '350', '400', '450'];
const menus = [['File', 35], ['Edit', 37], ['Image', 50], ['Layer', 45], ['Type', 43], ['Select', 49], ['Filter', 43], ['3D', 32], ['View', 43], ['Window', 61], ['Help', 40]];
const navItems = ['الصفحة الرئيسية', 'عن المكتبة', 'فهرست المكتبة', 'أضف كتابا', 'سجل معنا', 'إتصل بنا'];

const Panelmenu = () => (
  <PanelMenu><TriDown /><Bars /></PanelMenu>
);

export default function App() {
  return (
    <Screen>
      <Global />
      <MenuBar>
        <PsLogo>Ps</PsLogo>
        {menus.map(([m, w]) => <MenuItem key={m} $w={w}>{m}</MenuItem>)}
        <WinButtons>
          <WinBtn><Svg s={10} vb="0 0 10 10"><rect x="1" y="7" width="8" height="2" fill="#eee" /></Svg></WinBtn>
          <WinBtn><Svg s={12} vb="0 0 12 12"><path d="M4 1h7v6H8V4H4zM1 5h6v6H1z" stroke="#eee" fill="none" /></Svg></WinBtn>
          <WinBtn>X</WinBtn>
        </WinButtons>
      </MenuBar>

      <OptionsBar>
        <Grip />
        <IconRow $ml={13} $c="#c4c4c4"><MoveIcon s={19} /></IconRow>
        <IconRow $ml={7}><TriDown /></IconRow>
        <VSep $ml={7} />
        <Check $ml={7}><Svg s={12} vb="0 0 12 12"><path d="M2 6l3 4 5-9" stroke="#ddd" strokeWidth="1.500" /></Svg></Check>
        <OptLabel $ml={4}>Auto-Select:</OptLabel>
        <Select $w={56} $ml={13}>Group<Updown /></Select>
        <VSep $ml={9} />
        <Check $ml={9} />
        <OptLabel $ml={4}>Show Transform Controls</OptLabel>
        <VSep $ml={14} />
        <IconRow $ml={10} $gap={5}>{['top', 'mid', 'bot'].map((v) => <AlignIcon key={v} v={v} />)}</IconRow>
        <IconRow $ml={9} $gap={4}>{['left', 'cen', 'right'].map((v) => <AlignIcon key={v} v={v} />)}</IconRow>
        <VSep $ml={13} />
        <IconRow $ml={8} $gap={4}>{['dt', 'dm', 'db'].map((v) => <AlignIcon key={v} v={v} />)}</IconRow>
        <IconRow $ml={13} $gap={4}>{['dl', 'dc', 'dr'].map((v) => <AlignIcon key={v} v={v} />)}</IconRow>
        <VSep $ml={10} />
        <IconRow $ml={9}><AlignIcon v="auto" /></IconRow>
        <VSep $ml={12} />
        <OptLabel $ml={10} $dim>3D Mode:</OptLabel>
        <IconRow $ml={15} $gap={4}>
          <Svg><circle cx="11" cy="7" r="4" stroke="currentColor" /><path d="M1 14c0-3 3-5 6-4M4 16h12c3-2 2-5-1-6" stroke="currentColor" /></Svg>
          <Svg><circle cx="10" cy="10" r="8" stroke="currentColor" /><circle cx="10" cy="10" r="4" stroke="currentColor" /></Svg>
          <Svg><path d="M10 1l3 4h-2v4h4V7l4 3-4 3v-2h-4v4h2l-3 4-3-4h2v-4H5v2l-4-3 4-3v2h4V5H7z" stroke="currentColor" /></Svg>
          <Svg><path d="M10 1l3 4H7zM10 19l3-4H7zM1 10l4-3v6zM19 10l-4-3v6z" fill="currentColor" /><circle cx="10" cy="10" r="4" fill="currentColor" /></Svg>
          <Svg><rect x="1" y="6" width="11" height="9" fill="currentColor" /><path d="m18 5-5 5 5 5" stroke="currentColor" /></Svg>
        </IconRow>
        <OptSpacer />
        <Select $w={121} $h={20} $pl={7}>Essentials<Updown /></Select>
        <IconRow $ml={7} />
      </OptionsBar>

      <Workspace>
        <ToolColumn>
          <CollapseStrip>▸▸</CollapseStrip>
          <GripH />
          {toolIcons.map((t, i) => (t === 'div'
            ? <ToolDivider key={i} />
            : <ToolBtn key={i} $active={t[1]} $corner={t[2] !== false && !t[1]}>{t[0]}</ToolBtn>))}
          <SwapRow>
            <Svg s={13} vb="0 0 13 13"><rect x="1" y="1" width="7" height="7" fill="#111" stroke="#ddd" /><rect x="5" y="5" width="7" height="7" fill="#bbb" /></Svg>
            <Svg s={13} vb="0 0 13 13"><path d="M3 2v7h7M1 4l2-3 2 3M8 7l3 2-3 2" stroke="#ddd" /></Svg>
          </SwapRow>
          <ColorStack>
            <Swatch $x={11} $y={12} $s={20} $c="#fff" />
            <Swatch $x={1} $y={1} $s={20} $c="#a5b2cd" $line="#fff" $ring />
          </ColorStack>
          <ToolBtn $h={24}><Svg s={18} vb="0 0 18 18"><rect x="1" y="3" width="16" height="12" stroke="#ccc" /><circle cx="9" cy="9" r="3.500" stroke="#ddd" strokeDasharray="1.500 1" /></Svg></ToolBtn>
          <ToolBtn $corner $h={30}><Svg s={18} vb="0 0 18 18"><rect x="1" y="6" width="11" height="9" stroke="#ccc" /><rect x="5" y="2" width="12" height="9" fill="#777" stroke="#ccc" /></Svg></ToolBtn>
        </ToolColumn>

        <Center>
          <DocTabs>
            <DocTab $w={252} $mr={3}>صورة الموقع.psd @ 100% (Layer 1, RGB/8) *<CloseX>×</CloseX></DocTab>
            <DocTab $w={294} $active>مكتبتي 2.psd @ 100% (Menu_shadow copy, RGB/8)<CloseX>×</CloseX></DocTab>
          </DocTabs>
          <RulerRow>
            <RulerCorner />
            <RulerTrack>
              {rulerLabels.map((n) => <RulerCell key={n}>{n}</RulerCell>)}
            </RulerTrack>
            <ScrollTop><TriUp /></ScrollTop>
          </RulerRow>
          <CanvasRow>
            <VRuler>
              {vLabels.map((n) => (
                <VRulerCell key={n}>{n.split('').map((d, i) => <span key={i}>{d}</span>)}</VRulerCell>
              ))}
            </VRuler>
            <Pasteboard>
              <Guide $at={12} />
              <Guide $at={816} />
              <Guide $at={972} />
              <Guide $h $at={176} />
              <Doc>
                <TopBand />
                <Header>
                  <SocialRow>
                    <Social $bg="#1da1f2" $w={39}><FaTwitter size={32} /></Social>
                    <Social $bg="#3b5998" $align="flex-end"><FaFacebookF size={34} /></Social>
                    <Social $bg="#ee7b19"><FaRss size={30} /></Social>
                    <Social $bg="#cf1112" $w={43} $fg="#e9e9e9"><FaPlay size={14} /></Social>
                  </SocialRow>
                  <Brand>
                    <BrandTitle>مكتبتي</BrandTitle>
                    <BrandTag>كتب إلكترونية مجانية</BrandTag>
                  </Brand>
                </Header>
                <Nav>
                  <SearchBox>
                    <SearchBtn><FaSearch /></SearchBtn>
                    <SearchInput>إبحث في مكتبتي . . .</SearchInput>
                  </SearchBox>
                  <NavList>
                    {navItems.map((n, i) => <NavItem key={n} $active={i === 0}>{n}</NavItem>)}
                  </NavList>
                </Nav>
                <ShadowStrip>
                  <ShadowBlob />
                  <ShadowBlob />
                </ShadowStrip>
              </Doc>
            </Pasteboard>
            <VScroll><VThumb /></VScroll>
          </CanvasRow>
          <StatusBar>
            <StatusZoom>100%</StatusZoom>
            <StatusIcon><Svg s={12} vb="0 0 12 12"><circle cx="6" cy="6" r="5" fill="#bbb" /><path d="M4 3v6h4V6H6V3z" fill="#444" /></Svg></StatusIcon>
            <StatusDoc>Doc: 2.86M/6.93M</StatusDoc>
            <StatusArrow><TriRight /></StatusArrow>
            <HScroll>
              <TriLeft />
              <HThumb />
              <HRight><TriRight $sm $c="#ddd" /></HRight>
            </HScroll>
            <CornerPatch />
          </StatusBar>
          <TimelinePanel>
            <PanelTabs>
              <PanelTab $active>Timeline</PanelTab>
              <Panelmenu />
            </PanelTabs>
            <TimelineControls>
              <ControlsGroup $w={162} $pad={4}>
                <Svg s={12} vb="0 0 12 12"><path d="M1 2v8M11 2 4 6l7 4z" stroke="currentColor" fill="currentColor" /></Svg>
                <Svg s={12} vb="0 0 12 12"><path d="M7 2 1 6l6 4zM10 2v8" stroke="currentColor" fill="currentColor" /></Svg>
                <Svg s={12} vb="0 0 12 12"><path d="M2 1l9 5-9 5z" fill="currentColor" /></Svg>
                <Svg s={12} vb="0 0 12 12"><path d="M5 2l6 4-6 4zM2 2v8" stroke="currentColor" fill="currentColor" /></Svg>
                <Svg s={12} vb="0 0 12 12"><path d="M1 4h3l4-3v10L4 8H1z" fill="currentColor" /></Svg>
              </ControlsGroup>
              <ControlsGroup $w={76} $pad={4}>
                <Svg s={18} vb="0 0 18 18"><circle cx="3.500" cy="4" r="2.500" stroke="currentColor" /><circle cx="3.500" cy="14" r="2.500" stroke="currentColor" /><path d="M5 5l12 8M5 13 17 5" stroke="currentColor" /></Svg>
                <Svg s={14} vb="0 0 14 14"><rect x="0.500" y="0.500" width="13" height="13" stroke="currentColor" /><path d="M13 1 1 13h12z" fill="currentColor" /></Svg>
              </ControlsGroup>
              <ControlsGroup $w={755} />
            </TimelineControls>
            <TimelineBody>
              <TimelineBtn $w={136}>Create Video Timeline</TimelineBtn>
              <TimelineBtn $w={17}><TriDown $c="#eee" /></TimelineBtn>
            </TimelineBody>
            <TimelineFoot>
              <FootLeft>
                <Svg w={18} h={8} vb="0 0 18 8"><path d="M0.500 1.500h4v5h-4zM6.500 1.500h4v5h-4zM12.500 1.500h4v5h-4z" stroke="currentColor" /></Svg>
                <Svg s={14} vb="0 0 14 14"><path d="M1 12c0-5 3-7 7-7V2l5 5-5 5V9c-3 0-5 1-7 3z" fill="currentColor" /></Svg>
              </FootLeft>
              <FootMid>
                <Svg w={12} h={8} vb="0 0 12 8"><path d="M0 7 4 2l2 2 2-2 4 5z" stroke="currentColor" /></Svg>
                <ZoomTrack />
                <Svg w={20} h={12} vb="0 0 20 12"><path d="M0 11 6 3l3 4 3-5 7 9z" stroke="currentColor" /></Svg>
              </FootMid>
              <FootGap />
              <FootEnd />
            </TimelineFoot>
          </TimelinePanel>
        </Center>

        <Panels>
          <PanelCollapse>▸▸</PanelCollapse>
          <Panel $h={117}>
            <PanelTabs $h={17}>
              <PanelTab $active>Color</PanelTab>
              <PanelTab>Swatches</PanelTab>
              <Panelmenu />
            </PanelTabs>
            <ColorBody>
              <Swatch $x={16} $y={19} $s={20} $c="#fff" />
              <Swatch $x={6} $y={9} $s={20} $c="#a5b2cd" $line="#fff" $ring />
              <SliderRow>
                <SliderLabel>R</SliderLabel>
                <SliderWrap>
                  <SliderBar $bg="linear-gradient(90deg, #00b8d4, #a0b8c8, #f4b6cc)" />
                  <SliderThumb $x={50} />
                </SliderWrap>
                <ValueBox>165</ValueBox>
              </SliderRow>
              <SliderRow>
                <SliderLabel>G</SliderLabel>
                <SliderWrap>
                  <SliderBar $bg="linear-gradient(90deg, #a500cd, #a5b2cd, #a5f0cd)" />
                  <SliderThumb $x={54} />
                </SliderWrap>
                <ValueBox>178</ValueBox>
              </SliderRow>
              <SliderRow>
                <SliderLabel>B</SliderLabel>
                <SliderWrap>
                  <SliderBar $bg="linear-gradient(90deg, #a5b200, #a5b2a0, #a5b2ff)" />
                  <SliderThumb $x={63} />
                </SliderWrap>
                <ValueBox>205</ValueBox>
              </SliderRow>
              <Spectrum />
            </ColorBody>
          </Panel>
          <Panel $h={120}>
            <PanelTabs $h={18}>
              <PanelTab $active>Adjustments</PanelTab>
              <PanelTab>Styles</PanelTab>
              <Panelmenu />
            </PanelTabs>
            <AdjTitle>Add an adjustment</AdjTitle>
            <AdjRow>{['sun', 'levels', 'curves', 'expo', 'tri'].map((v) => <Adj key={v} v={v} />)}</AdjRow>
            <AdjRow>{['hue', 'bal', 'bw', 'photo', 'mixer', 'lut'].map((v) => <Adj key={v} v={v} />)}</AdjRow>
            <AdjRow>{['inv', 'post', 'thresh', 'sel', 'map'].map((v) => <Adj key={v} v={v} />)}</AdjRow>
          </Panel>
          <Panel $h={409}>
            <PanelTabs $h={17}>
              <PanelTab $active>Layers</PanelTab>
              <PanelTab>Channels</PanelTab>
              <PanelTab>Paths</PanelTab>
              <Panelmenu />
            </PanelTabs>
            <FilterRow $h={27}>
              <Select $w={69} $pl={6}>
                <KindLabel>
                  <Svg s={10} vb="0 0 10 10"><circle cx="6" cy="4" r="3" stroke="#ddd" /><path d="M4 6 1 9" stroke="#ddd" strokeWidth="1.300" /></Svg>
                  Kind
                </KindLabel>
                <Updown />
              </Select>
              <IconRow $ml={12} $gap={10} $c="#b0b0b0">
                <Svg s={14} vb="0 0 14 14"><rect x="0.500" y="2.500" width="13" height="9" stroke="currentColor" /><path d="M2 10l3-3 2 2 2-1 3 2z" fill="currentColor" /></Svg>
                <Svg s={14} vb="0 0 14 14"><circle cx="7" cy="7" r="5.500" fill="#bbb" /><path d="M3 11 11 3a5.500 5.500 0 0 0-8 8z" fill="#555" /></Svg>
                <Svg s={14} vb="0 0 14 14"><path d="M1 1h12v3h-1c0-1-1-1-2-1H8v8l1 1v1H5v-1l1-1V3H4C3 3 2 3 2 4H1z" fill="currentColor" /></Svg>
                <Svg s={14} vb="0 0 14 14"><path d="M2.500 2.500h9v9h-9z" stroke="currentColor" /><path d="M1 1h3v3H1zM10 1h3v3h-3zM1 10h3v3H1zM10 10h3v3h-3z" stroke="currentColor" fill="#535353" /></Svg>
                <Svg s={14} vb="0 0 14 14"><path d="M5 1h6l2 2v9H8V6H5z" fill="currentColor" /><rect x="1" y="6" width="7" height="7" fill="#888" /></Svg>
                <Svg w={10} h={16} vb="0 0 10 16"><rect width="10" height="8" fill="#888" /><rect y="8" width="10" height="8" fill="#333" /></Svg>
              </IconRow>
            </FilterRow>
            <FilterRow $h={29}>
              <Select $w={110} $pl={7}>Normal<Updown /></Select>
              <OptLabel $ml={8}>Opacity:</OptLabel>
              <NumBox $ml={6}>100%<NumArrow><TriDown $c="#eee" /></NumArrow></NumBox>
            </FilterRow>
            <FilterRow $h={30}>
              <OptLabel $ml={2}>Lock:</OptLabel>
              <IconRow $ml={9} $gap={8} $c="#b8b8b8">
                <Svg s={13} vb="0 0 12 12"><path d="M0 0h4v4H0zM8 0h4v4H8zM4 4h4v4H4zM0 8h4v4H0zM8 8h4v4H8z" fill="#ccc" /><path d="M4 0h4v4H4zM0 4h4v4H0zM8 4h4v4H8zM4 8h4v4H4z" fill="#777" /></Svg>
                <Svg s={14} vb="0 0 14 14"><path d="M5 9 13 1l1 1-7 8z" fill="currentColor" /><path d="M5 9c-1 2-2 3-5 4 3 1 7 0 7-3z" fill="currentColor" /></Svg>
                <Svg s={14} vb="0 0 14 14"><path d="M7 0v14M0 7h14M7 0 5 3h4zM7 14l-2-3h4zM0 7l3-2v4zM14 7l-3-2v4z" stroke="currentColor" fill="currentColor" strokeWidth="0.800" /></Svg>
                <Svg s={14} vb="0 0 14 14"><path d="M4 6V4a3 3 0 0 1 6 0v2" stroke="currentColor" /><rect x="2.500" y="6" width="9" height="7" fill="currentColor" /></Svg>
              </IconRow>
              <OptLabel $ml={27}>Fill:</OptLabel>
              <NumBox $ml={5}>100%<NumArrow><TriDown $c="#eee" /></NumArrow></NumBox>
            </FilterRow>
            <LayersWrap>
              <LayerList>
                <LayerRow>
                  <EyeCell><Eye /></EyeCell>
                  <LayerBody>
                    <LayerMain>
                      <TypeGlyph />
                      <LayerName $ml={15} $rtl>إبحث في مكتبتي . . .</LayerName>
                    </LayerMain>
                  </LayerBody>
                </LayerRow>
                <LayerRow $h={77}>
                  <EyeCell><Eye /></EyeCell>
                  <LayerBody>
                    <LayerMain>
                      <ShapeThumb />
                      <LayerName $ml={8}>Rectangle 3</LayerName>
                    </LayerMain>
                    <EffectLine $pl={20}><Eye c="#9a9a9a" />Effects</EffectLine>
                    <EffectLine $pl={37}><Eye c="#9a9a9a" />Stroke</EffectLine>
                  </LayerBody>
                  <FxMark>fx</FxMark>
                  <FxScroll><TriUp /></FxScroll>
                </LayerRow>
                <LayerRow>
                  <EyeCell><Eye /></EyeCell>
                  <LayerBody>
                    <LayerMain>
                      <Checker />
                      <LayerName $ml={10}>Layer 6</LayerName>
                    </LayerMain>
                  </LayerBody>
                </LayerRow>
                <LayerRow>
                  <EyeCell><Eye /></EyeCell>
                  <LayerBody>
                    <LayerMain>
                      <TypeGlyph />
                      <LayerName $ml={15}>عن الملك</LayerName>
                      <LayerName $ml={18}>الصفحة الرئيسية...</LayerName>
                    </LayerMain>
                  </LayerBody>
                </LayerRow>
                <LayerRow>
                  <EyeCell><Eye /></EyeCell>
                  <LayerBody>
                    <LayerMain>
                      <ShapeThumb />
                      <LayerName $ml={8}>Shape 1 copy</LayerName>
                    </LayerMain>
                  </LayerBody>
                </LayerRow>
                <LayerRow>
                  <EyeCell><Eye /></EyeCell>
                  <LayerBody>
                    <LayerMain>
                      <ShapeThumb />
                      <LayerName $ml={8}>Shape 1</LayerName>
                    </LayerMain>
                  </LayerBody>
                </LayerRow>
                <LayerRow $h={15} $selected>
                  <EyeCell />
                  <Checker $mt={1} $ml={3} />
                </LayerRow>
              </LayerList>
              <LayerScroll>
                <TriUp />
                <LayerThumb />
                <OptSpacer />
                <TriDown />
              </LayerScroll>
            </LayersWrap>
            <LayerFoot>
              <Svg s={15} vb="0 0 15 15"><path d="M6 5H3a2.500 2.500 0 0 0 0 5h3M9 5h3a2.500 2.500 0 0 1 0 5H9M4 7.500h7" stroke="currentColor" strokeWidth="1.300" /></Svg>
              <Svg s={15} vb="0 0 15 15"><text x="1" y="12" fontSize="12" fontStyle="italic" fontFamily="Liberation Serif" fill="currentColor">fx</text></Svg>
              <Svg s={15} vb="0 0 15 15"><rect x="1" y="2" width="13" height="11" fill="currentColor" /><circle cx="7.500" cy="7.500" r="3" fill="#333" /></Svg>
              <Svg s={15} vb="0 0 15 15"><circle cx="7.500" cy="7.500" r="6" fill="#bbb" /><path d="M3 12 12 3a6 6 0 0 0-9 9z" fill="#555" /></Svg>
              <Svg s={15} vb="0 0 15 15"><path d="M1 3h5l1 2h7v8H1z" fill="currentColor" /></Svg>
              <Svg s={15} vb="0 0 15 15"><path d="M2 1h9l2 2v10H8v-5H2z" fill="currentColor" /><rect x="3" y="9" width="4" height="4" fill="#ddd" /></Svg>
              <Svg s={15} vb="0 0 15 15"><path d="M1 3h13M5 3V1h5v2M3 5v9h9V5M6 5v8M9 5v8" stroke="currentColor" /></Svg>
            </LayerFoot>
          </Panel>
        </Panels>

        <Dock>
          <PanelCollapse>◂◂</PanelCollapse>
          <DockSection $h={41}>
            <DockGrip />
            <Svg w={16} h={22} vb="0 0 16 22"><path d="M1.500 1.500h4v4h-4zM1.500 8.500h4v4h-4z" stroke="currentColor" /><rect x="1" y="15" width="5" height="5" fill="currentColor" /><path d="M9 3c5 0 6 3 5 7-1 3-2 5-4 6M8 3l3-2v4z" stroke="currentColor" /></Svg>
          </DockSection>
          <DockSection $h={41}>
            <DockGrip />
            <Svg w={18} h={22} vb="0 0 18 22"><path d="M5 2l5 2v6l-5 2-5-2V4z" fill="currentColor" /><path d="M12 3h5v3h-5zM12 8h5v3h-5z" fill="currentColor" /><rect x="0" y="15" width="18" height="4" fill="#999" /></Svg>
          </DockSection>
          <DockSection $h={68} $gap={8}>
            <DockGrip />
            <Svg s={20} vb="0 0 20 20"><path d="M0 18 6 2h3l6 16h-3l-1-4H5l-1 4zM6 12h4L8 6z" fill="currentColor" /><path d="M18 1v18" stroke="#ddd" /></Svg>
            <Svg s={18} vb="0 0 18 18"><path d="M4 1h12v15h-2V3h-2v13h-2V9H7a4 4 0 0 1-3-8z" fill="currentColor" /></Svg>
          </DockSection>
          <DockFill />
        </Dock>
      </Workspace>

      <Taskbar>
        <TaskBtn><Windows /></TaskBtn>
        <TaskBtn><Magnifier /></TaskBtn>
        <TaskBtn><Folder /></TaskBtn>
        <TaskBtn><Router /></TaskBtn>
        <TaskBtn><Pc /></TaskBtn>
        <TaskBtn><Clapper /></TaskBtn>
        <TaskBtn><Disc /></TaskBtn>
        <TaskBtn><Penguin /></TaskBtn>
        <TaskBtn><Idm /></TaskBtn>
        <TaskBtn $open><Chrome /></TaskBtn>
        <TaskBtn $active $open><PsTile>Ps</PsTile></TaskBtn>
        <Tray>
          <TrayItem $w={23}><Svg s={14} vb="0 0 14 14"><path d="M1 10 7 4l6 6" stroke="#eee" /></Svg></TrayItem>
          <TrayItem $w={23}><Svg w={18} h={14} vb="0 0 18 14"><path d="M3 1v3M6 1v3M1.500 4h6v3l-2 2H3.500L1.500 7zM4.500 9v3" stroke="#eee" /><rect x="8" y="3.500" width="9" height="7" stroke="#777" /><path d="m10 5 4 4M14 5l-4 4" stroke="#eee" /></Svg></TrayItem>
          <TrayItem $w={29}><Svg s={16} vb="0 0 16 16"><path d="M1 14C2 7 7 2 14 1M4 14c1-4 4-7 8-9M7 14c1-2 2-3 4-4" stroke="#bbb" strokeDasharray="1 1" /><circle cx="12" cy="13" r="1.300" fill="#eee" /></Svg></TrayItem>
          <TrayItem $w={17}><Svg s={16} vb="0 0 16 16"><path d="M1 6h3l4-4v12l-4-4H1zM10 5c1 2 1 4 0 6M12 3c2 3 2 7 0 10" stroke="#eee" /></Svg></TrayItem>
          <TrayItem $w={41}>ENG</TrayItem>
          <Clock>10:00 AM<br />2021-04-22</Clock>
          <TrayItem $w={45}><Svg s={18} vb="0 0 18 18"><path d="M1.500 2.500h15v11h-5l-2.500 2.500-2.500-2.500h-5z" stroke="#eee" /></Svg></TrayItem>
        </Tray>
      </Taskbar>
    </Screen>
  );
}
